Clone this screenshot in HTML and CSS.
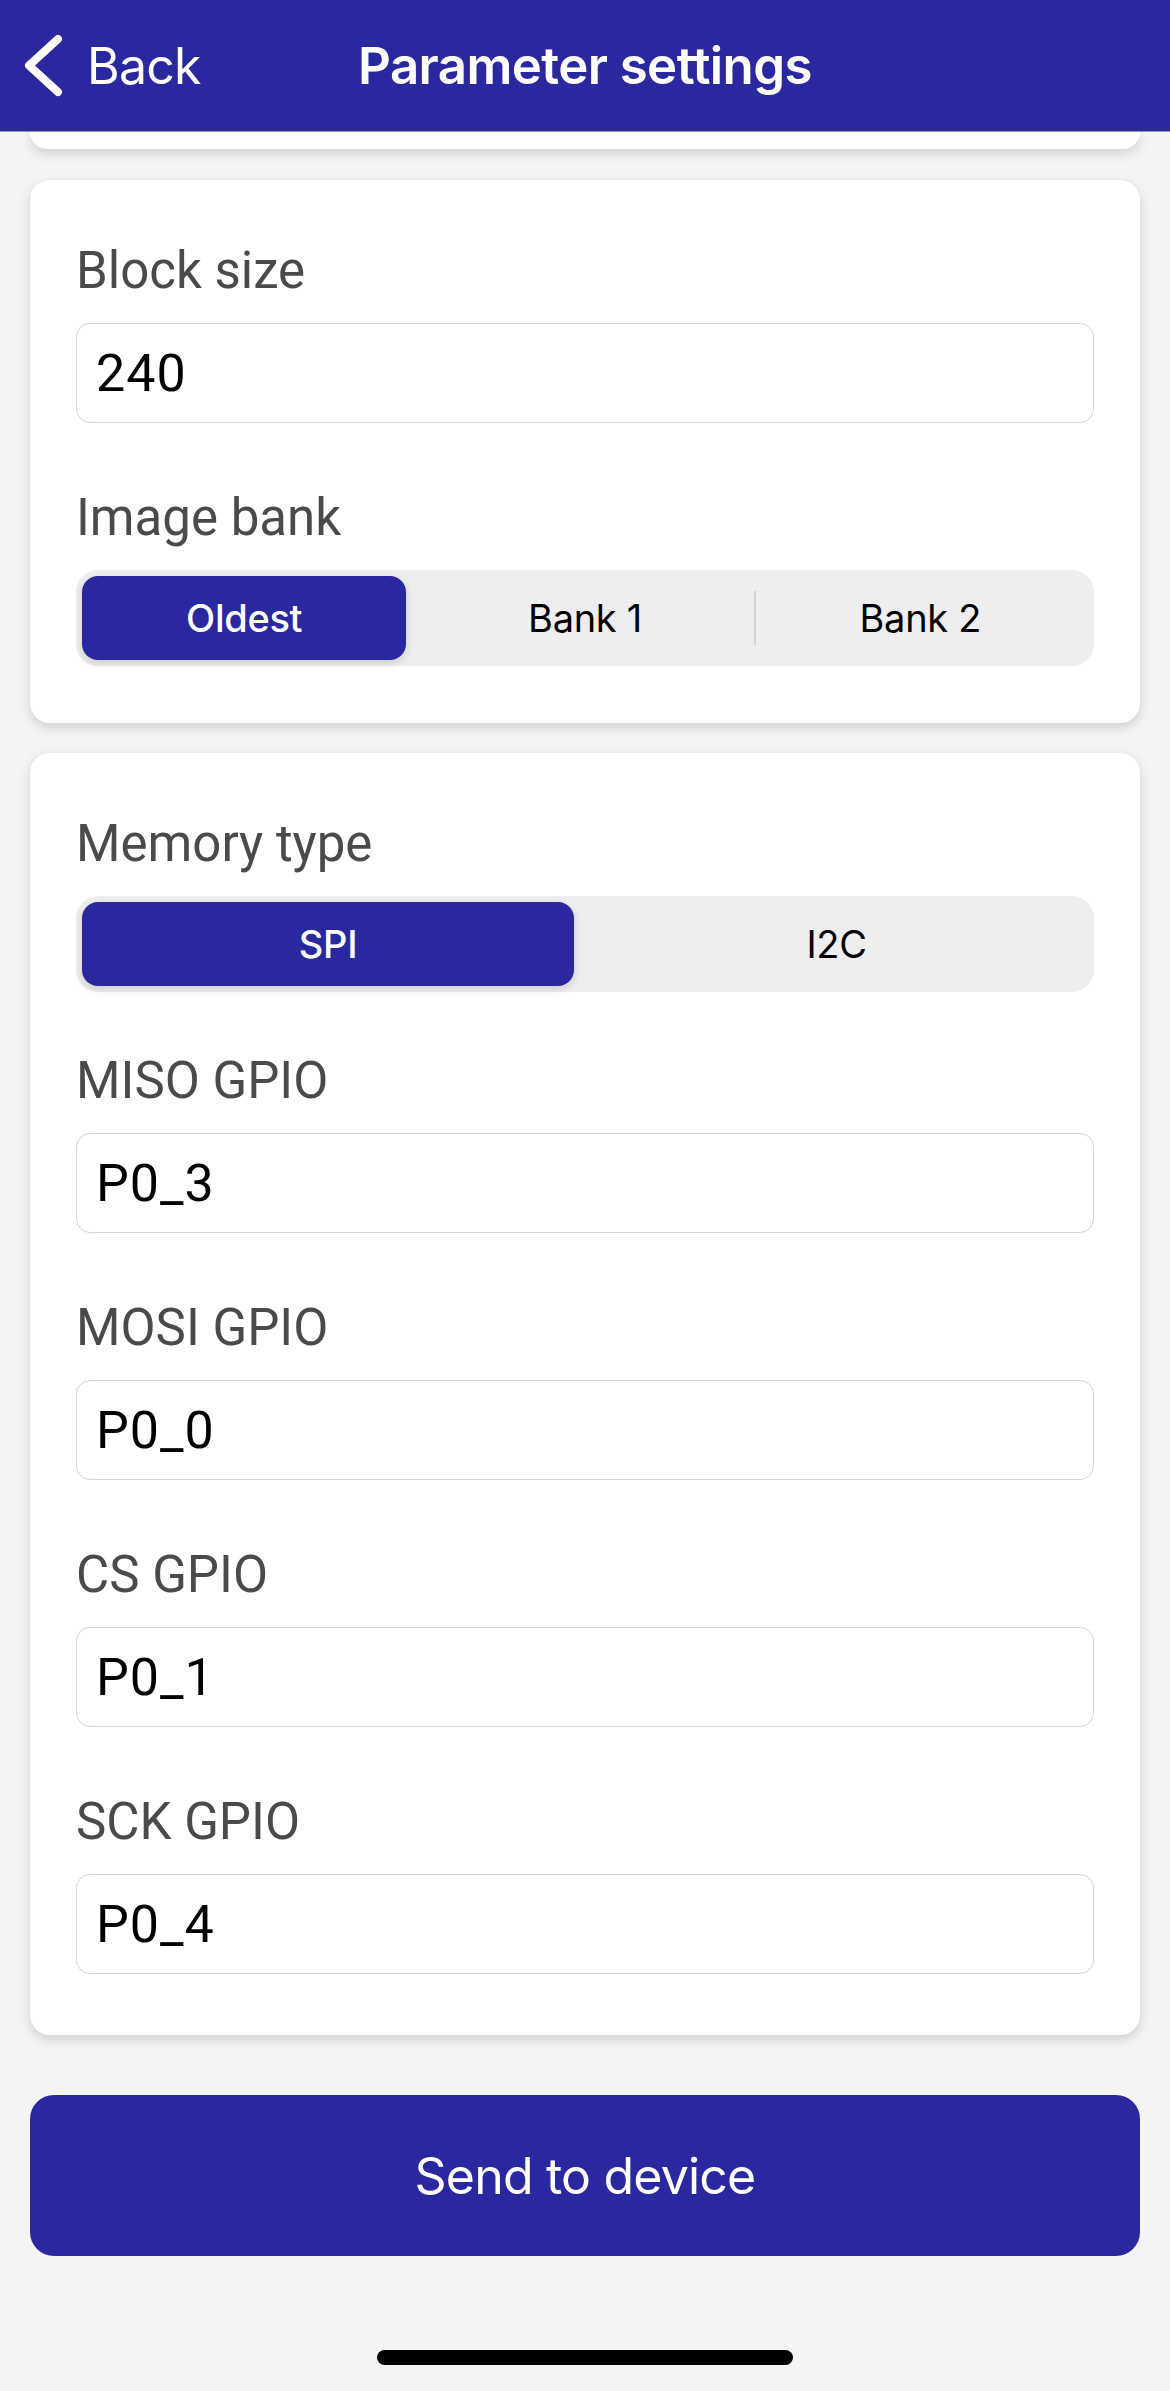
FILE: index.html
```html
<!DOCTYPE html>
<html lang="en">
<head>
<meta charset="utf-8">
<title>Parameter settings</title>
<link rel="stylesheet" href="styles.css">
</head>
<body>
<header class="nav">
  <div class="nav-left">
    <svg class="chev" width="40" height="64" viewBox="0 0 40 64" aria-hidden="true">
      <path d="M34 5 L5 31.5 L34 58" fill="none" stroke="#fff" stroke-width="8" stroke-linecap="round" stroke-linejoin="round"/>
    </svg>
    <span class="back">Back</span>
  </div>
  <h1 class="title">Parameter settings</h1>
  <div class="nav-right"></div>
</header>

<main class="content">
  <section class="card card-cut"></section>

  <section class="card card-short">
    <div class="field">
      <label class="label">Block size</label>
      <div class="input">240</div>
    </div>
    <div class="field">
      <label class="label">Image bank</label>
      <div class="seg seg-3">
        <span class="opt sel">Oldest</span>
        <span class="opt">Bank 1</span>
        <span class="opt divided">Bank 2</span>
      </div>
    </div>
  </section>

  <section class="card">
    <div class="field field-seg">
      <label class="label">Memory type</label>
      <div class="seg seg-2">
        <span class="opt sel">SPI</span>
        <span class="opt">I2C</span>
      </div>
    </div>
    <div class="field">
      <label class="label">MISO GPIO</label>
      <div class="input">P0_3</div>
    </div>
    <div class="field">
      <label class="label">MOSI GPIO</label>
      <div class="input">P0_0</div>
    </div>
    <div class="field">
      <label class="label">CS GPIO</label>
      <div class="input">P0_1</div>
    </div>
    <div class="field">
      <label class="label">SCK GPIO</label>
      <div class="input">P0_4</div>
    </div>
  </section>

  <button class="send" type="button">Send to device</button>
  <div class="home"></div>
</main>
</body>
</html>
```

FILE: styles.css
```css
* { box-sizing: border-box; }

html, body {
  margin: 0;
  padding: 0;
}

body {
  width: 1170px;
  min-height: 2391px;
  background: #f4f4f4;
  font-family: Roboto, "Liberation Sans", sans-serif;
}

.nav {
  height: 132px;
  background: #2a289e;
  border-bottom: 1px solid #9a9a9a;
  display: grid;
  grid-template-columns: 1fr auto 1fr;
  align-items: center;
  color: #fff;
}

.nav-left {
  display: flex;
  align-items: center;
  padding-left: 24px;
}

.chev {
  display: block;
  margin-right: 23px;
}

.back {
  font-family: Inter, "Liberation Sans", sans-serif;
  font-size: 50px;
  font-weight: 400;
  letter-spacing: -0.8px;
}

.title {
  margin: 0;
  font-family: Inter, "Liberation Sans", sans-serif;
  font-size: 51px;
  font-weight: 600;
  letter-spacing: -0.6px;
}

.content {
  padding: 0 30px;
  display: flex;
  flex-direction: column;
}

.card {
  background: #fff;
  border-radius: 20px;
  padding: 61px 46px 61px;
  box-shadow: 0 4px 12px rgba(0, 0, 0, 0.16);
  margin-top: 30px;
}

.card-cut {
  height: 17px;
  padding: 0;
  margin-top: 0;
  border-radius: 0 0 20px 20px;
}

.card-cut + .card {
  margin-top: 31px;
}

.card-short {
  padding-bottom: 57px;
}

.field + .field {
  margin-top: 65px;
}

.field-seg + .field {
  margin-top: 59px;
}

.label {
  display: block;
  font-size: 51px;
  line-height: 60px;
  color: #4a4a4a;
  margin-bottom: 22px;
}

.input {
  height: 100px;
  border: 1px solid #d2d2d2;
  border-radius: 14px;
  padding-left: 19px;
  display: flex;
  align-items: center;
  font-size: 52px;
  letter-spacing: 1px;
  color: #000;
  background: #fff;
}

.seg {
  height: 96px;
  background: #eeeef0;
  border-radius: 22px;
  padding: 6px;
  display: grid;
}

.seg-3 { grid-template-columns: repeat(3, 1fr); }
.seg-2 { grid-template-columns: repeat(2, 1fr); }

.opt {
  position: relative;
  display: flex;
  align-items: center;
  justify-content: center;
  font-family: Inter, "Liberation Sans", sans-serif;
  font-size: 38px;
  letter-spacing: -0.3px;
  color: #000;
  border-radius: 16px;
}

.opt.sel {
  background: #2a289e;
  color: #fff;
  font-weight: 500;
  margin-right: 11px;
  box-shadow: 0 3px 8px rgba(0, 0, 0, 0.14);
}

.opt.divided::before {
  content: "";
  position: absolute;
  left: 1px;
  top: 15px;
  bottom: 15px;
  width: 2px;
  background: #d3d3d8;
}

.send {
  margin-top: 60px;
  height: 161px;
  width: 100%;
  border: 0;
  border-radius: 24px;
  background: #2a289e;
  color: #fff;
  font-family: Inter, "Liberation Sans", sans-serif;
  font-size: 50px;
  font-weight: 400;
  letter-spacing: -0.8px;
}

.home {
  margin: 94px auto 0;
  width: 416px;
  height: 15px;
  border-radius: 8px;
  background: #000;
}
```
